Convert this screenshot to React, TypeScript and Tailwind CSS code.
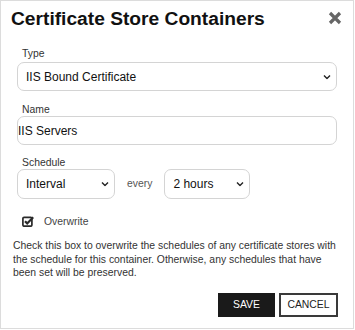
import React from "react";

function Chevron() {
  return (
    <svg
      className="pointer-events-none absolute right-[6px] top-1/2 -translate-y-1/2"
      width="8"
      height="5"
      viewBox="0 0 8 5"
      fill="none"
    >
      <path d="M1 1 L4 4 L7 1" stroke="#222" strokeWidth="1.4" />
    </svg>
  );
}

function Select({ value, className }: { value: string; className: string }) {
  return (
    <div className={`relative ${className}`}>
      <select
        defaultValue={value}
        className="h-full w-full appearance-none rounded-[7px] border border-[#d4d4d4] bg-white pl-[8px] text-[12px] text-[#111] outline-none"
      >
        <option>{value}</option>
      </select>
      <Chevron />
    </div>
  );
}

export default function App() {
  return (
    <div className="h-[329px] w-[354px] border border-[#dcdcdc] bg-white pl-[10px] pr-[11px] pt-[7px] font-['Liberation_Sans',Arial,sans-serif] text-[#333]">
      {/* cabeçalho */}
      <div className="flex items-start justify-between">
        <h1 className="text-[19.2px] font-bold leading-[22px] text-[#111]">
          Certificate Store Containers
        </h1>
        <button className="mt-[3px]">
          <svg width="14" height="14" viewBox="0 0 14 14">
            <path d="M2 2 L12 12 M12 2 L2 12" stroke="#666" strokeWidth="3.2" />
          </svg>
        </button>
      </div>

      {/* formulário */}
      <div className="ml-[6px] mr-[5px] flex flex-col">
        <label className="mt-[17px] pl-[5px] text-[10.4px] leading-[13px]">Type</label>
        <Select value="IIS Bound Certificate" className="mt-[2px] h-[29px] w-full" />

        <label className="mt-[12px] pl-[5px] text-[10.4px] leading-[13px]">Name</label>
        <input
          defaultValue="IIS Servers"
          className="h-[29px] w-full rounded-[7px] border border-[#d4d4d4] pl-0 text-[12px] text-[#111] outline-none"
        />

        <label className="mt-[11px] pl-[5px] text-[10.4px] leading-[13px]">Schedule</label>
        <div className="flex h-[30px] items-center">
          <Select value="Interval" className="h-full w-[98px]" />
          <span className="mx-[12px] text-[10.4px] text-[#555]">every</span>
          <Select value="2 hours" className="h-full w-[86px]" />
        </div>

        <div className="mt-[16px] flex h-[13px] items-center pl-[5px]">
          <svg width="12" height="11" viewBox="0 0 12 11" fill="none">
            <rect x="0.9" y="1.4" width="9" height="8.8" rx="1.2" stroke="#2a2a2a" strokeWidth="1.7" />
            <path d="M3 5.2 L5.2 7.4 L11.2 1.2" stroke="#2a2a2a" strokeWidth="2.2" />
          </svg>
          <span className="ml-[10px] text-[10.4px] text-[#444]">Overwrite</span>
        </div>
      </div>

      <p className="ml-[2px] mr-[2px] mt-[11px] text-[10.4px] leading-[13.5px] text-[#333]">
        Check this box to overwrite the schedules of any certificate stores with
        the schedule for this container. Otherwise, any schedules that have
        been set will be preserved.
      </p>

      <div className="mr-[4px] mt-[13px] flex justify-end gap-[4px]">
        <button className="h-[24px] w-[57px] bg-[#1a1a1a] text-[10.4px] text-white">SAVE</button>
        <button className="h-[24px] w-[59px] border-2 border-[#3a3a3a] bg-white text-[10.4px] text-[#222]">
          CANCEL
        </button>
      </div>
    </div>
  );
}
